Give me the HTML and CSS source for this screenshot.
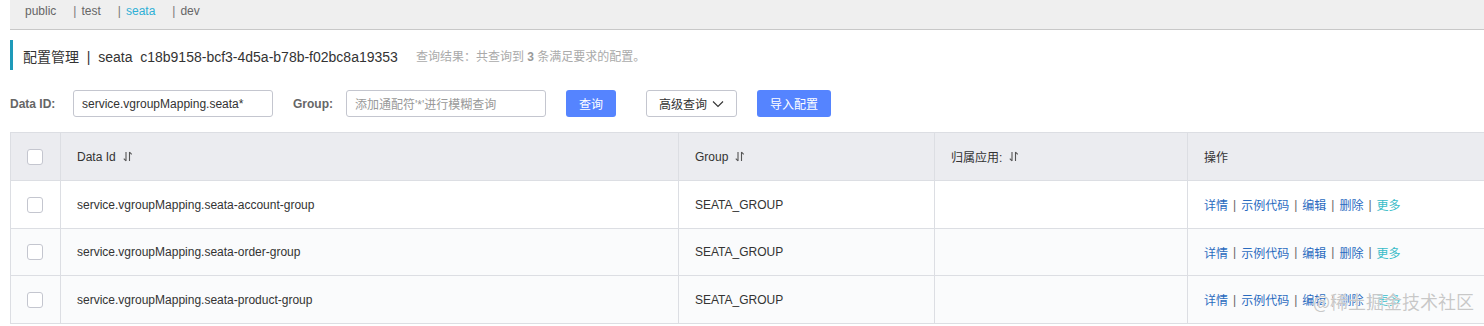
FILE: index.html
```html
<!DOCTYPE html>
<html>
<head>
<meta charset="utf-8">
<link rel="stylesheet" href="styles.css">
</head>
<body>
<div class="page">
  <div class="nav">
    <span class="ns">public</span>
    <span class="ns"><span class="sep">|</span>test</span>
    <span class="ns active"><span class="sep">|</span>seata</span>
    <span class="ns"><span class="sep">|</span>dev</span>
  </div>
  <div class="title">
    <span class="title-main">配置管理 &nbsp;|&nbsp; seata &nbsp;c18b9158-bcf3-4d5a-b78b-f02bc8a19353</span>
    <span class="title-sub">查询结果：共查询到 <b>3</b> 条满足要求的配置。</span>
  </div>
  <div class="search">
    <label class="lbl">Data ID:</label>
    <div class="input">service.vgroupMapping.seata*</div>
    <label class="lbl lbl-group">Group:</label>
    <div class="input placeholder">添加通配符'*'进行模糊查询</div>
    <button class="btn primary btn-query">查询</button>
    <button class="btn normal btn-adv">高级查询 <svg width="12" height="8" viewBox="0 0 12 8"><path d="M1 1.5 L6 6.5 L11 1.5" fill="none" stroke="#333" stroke-width="1.1"/></svg></button>
    <button class="btn primary btn-import">导入配置</button>
  </div>
  <div class="table">
    <div class="row head">
      <div class="cell c-check"><span class="cb"></span></div>
      <div class="cell c-id">Data Id <svg class="sort" width="10" height="11" viewBox="0 0 10 11"><path d="M3 1 V10 M0.8 7.6 L3 10 M6.5 10 V1 M6.5 1 L8.7 3.4" fill="none" stroke="#555" stroke-width="1.1"/></svg></div>
      <div class="cell c-group">Group <svg class="sort" width="10" height="11" viewBox="0 0 10 11"><path d="M3 1 V10 M0.8 7.6 L3 10 M6.5 10 V1 M6.5 1 L8.7 3.4" fill="none" stroke="#555" stroke-width="1.1"/></svg></div>
      <div class="cell c-app">归属应用: <svg class="sort" width="10" height="11" viewBox="0 0 10 11"><path d="M3 1 V10 M0.8 7.6 L3 10 M6.5 10 V1 M6.5 1 L8.7 3.4" fill="none" stroke="#555" stroke-width="1.1"/></svg></div>
      <div class="cell c-op">操作</div>
    </div>
    <div class="row">
      <div class="cell c-check"><span class="cb"></span></div>
      <div class="cell c-id">service.vgroupMapping.seata-account-group</div>
      <div class="cell c-group">SEATA_GROUP</div>
      <div class="cell c-app"></div>
      <div class="cell c-op ops"><a>详情</a><i>|</i><a>示例代码</a><i>|</i><a>编辑</a><i>|</i><a>删除</a><i>|</i><a class="more">更多</a></div>
    </div>
    <div class="row alt r2">
      <div class="cell c-check"><span class="cb"></span></div>
      <div class="cell c-id">service.vgroupMapping.seata-order-group</div>
      <div class="cell c-group">SEATA_GROUP</div>
      <div class="cell c-app"></div>
      <div class="cell c-op ops"><a>详情</a><i>|</i><a>示例代码</a><i>|</i><a>编辑</a><i>|</i><a>删除</a><i>|</i><a class="more">更多</a></div>
    </div>
    <div class="row alt">
      <div class="cell c-check"><span class="cb"></span></div>
      <div class="cell c-id">service.vgroupMapping.seata-product-group</div>
      <div class="cell c-group">SEATA_GROUP</div>
      <div class="cell c-app"></div>
      <div class="cell c-op ops"><a>详情</a><i>|</i><a>示例代码</a><i>|</i><a>编辑</a><i>|</i><a>删除</a><i>|</i><a class="more">更多</a></div>
    </div>
  </div>
  <div class="watermark">@稀土掘金技术社区</div>
</div>
</body>
</html>
```
FILE: styles.css
```css
* { box-sizing: border-box; }
html, body { margin: 0; padding: 0; background: #fff; }
body {
  font-family: "Liberation Sans", Arial, "Noto Sans CJK SC", sans-serif;
  font-size: 12px;
  color: #333;
  width: 1484px;
  height: 326px;
  overflow: hidden;
}
.page { position: relative; padding-left: 10px; height: 326px; }

.nav {
  height: 30px;
  background: #efefef;
  border-bottom: 1px solid #c8c8c8;
  display: flex;
  align-items: center;
  padding-left: 15px;
  padding-bottom: 8px;
  color: #666;
  font-size: 12px;
}
.ns { margin-right: 17px; }
.ns .sep { margin-right: 5px; color: #777; }
.ns.active { color: #2fb0d6; }

.title {
  margin-top: 10px;
  height: 30px;
  border-left: 3px solid #1e9ab9;
  display: flex;
  align-items: center;
  padding-left: 10px;
  padding-top: 1px;
}
.title-main { font-size: 14px; color: #333; }
.title-sub { font-size: 12px; color: #aaa; margin-left: 18px; }
.title-sub b { font-weight: bold; color: #999; }

.search {
  margin-top: 20px;
  display: flex;
  align-items: center;
  height: 27px;
}
.lbl { font-weight: bold; color: #666; font-size: 12px; width: 63px; }
.lbl-group { margin-left: 20px; width: 53px; }
.input {
  width: 200px;
  height: 27px;
  border: 1px solid #c4c6cf;
  border-radius: 3px;
  padding-left: 8px;
  display: flex;
  align-items: center;
  color: #333;
  font-size: 12px;
}
.input.placeholder { color: #999; }
.btn {
  height: 27px;
  border-radius: 3px;
  font-family: inherit;
  font-size: 12px;
  display: flex;
  align-items: center;
  justify-content: center;
  padding: 0;
  gap: 5px;
}
.btn.primary { background: #5584ff; color: #fff; border: none; }
.btn.normal { background: #fff; color: #333; border: 1px solid #c4c6cf; }
.btn-query { width: 50px; margin-left: 20px; }
.btn-adv { width: 91px; margin-left: 30px; }
.btn-import { width: 74px; margin-left: 20px; }

.table {
  margin-top: 15px;
  border-top: 1px solid #dcdee3;
  border-left: 1px solid #dcdee3;
}
.row {
  display: flex;
  height: 48px;
  border-bottom: 1px solid #dcdee3;
}
.row.r2 { height: 47px; }
.row.head { background: #ebecf0; }
.row.alt { background: #fafbfc; }
.cell {
  display: flex;
  align-items: center;
  border-right: 1px solid #dcdee3;
  padding-left: 16px;
  color: #333;
  font-size: 12px;
}
.c-check { width: 50px; padding-left: 16px; }
.c-id { width: 618px; }
.c-group { width: 256px; }
.c-app { width: 253px; }
.c-op { flex: 1; border-right: none; }
.sort { margin-left: 7px; }
.cb {
  width: 16px;
  height: 16px;
  border: 1px solid #c4c6cf;
  border-radius: 3px;
  background: #fff;
  display: block;
}
.ops a { color: #2a6bbf; }
.ops a.more { color: #38bcc8; }
.ops i { font-style: normal; color: #666; margin: 0 5px; }

.watermark {
  position: absolute;
  left: 1313px;
  top: 288px;
  font-family: "Noto Sans CJK SC", sans-serif;
  font-size: 18px;
  color: rgba(190,190,190,0.85);
  text-shadow: 0 0 1px #fff, 0 0 1px #fff;
}
```
